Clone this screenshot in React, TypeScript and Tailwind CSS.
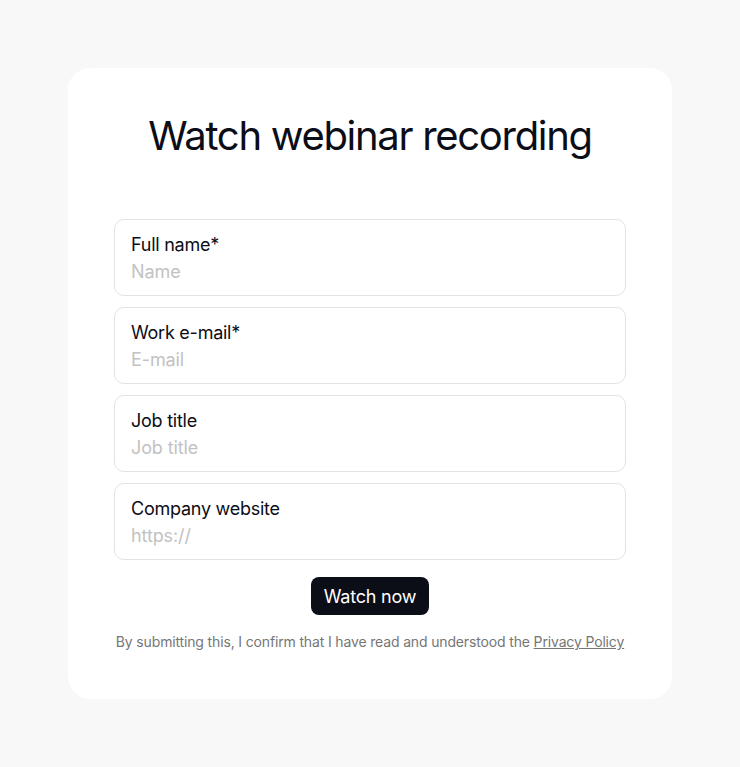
const fields = [
  { label: "Full name*", placeholder: "Name" },
  { label: "Work e-mail*", placeholder: "E-mail" },
  { label: "Job title", placeholder: "Job title" },
  { label: "Company website", placeholder: "https://" },
];

export default function App() {
  return (
    <div className="min-h-[767px] bg-[#f8f8f8] pt-[68px] font-['Inter',sans-serif]">
      <div className="mx-auto w-[604px] rounded-[22px] bg-white px-[46px] pt-[42px] pb-[47px]">
        <h1 className="text-center text-[40px] leading-[52px] tracking-[-1.3px] text-[#0b0d17]">
          Watch webinar recording
        </h1>

        <form className="mt-[57px] flex flex-col gap-[11px]">
          {fields.map((f) => (
            <label
              key={f.label}
              className="flex h-[77px] flex-col rounded-[10px] border border-[#e3e3e3] px-4 pt-[13px]"
            >
              <span className="text-[18px] leading-[24px] tracking-[-0.25px] text-[#0b0d17]">{f.label}</span>
              <input
                placeholder={f.placeholder}
                className="mt-[3px] bg-transparent text-[18px] leading-[24px] tracking-[-0.1px] text-[#0b0d17] outline-none placeholder:text-[#c2c2c2]"
              />
            </label>
          ))}
        </form>

        <div className="mt-[17px] flex justify-center">
          <button className="h-[38px] w-[118px] rounded-[8px] bg-[#0b0d17] text-[18px] tracking-[-0.2px] text-white">
            Watch now
          </button>
        </div>

        <p className="mt-[17px] whitespace-nowrap text-center text-[14px] leading-[20px] tracking-[-0.15px] text-[#767676]">
          By submitting this, I confirm that I have read and understood the{" "}
          <a href="#" className="underline">Privacy Policy</a>
        </p>
      </div>
    </div>
  );
}
